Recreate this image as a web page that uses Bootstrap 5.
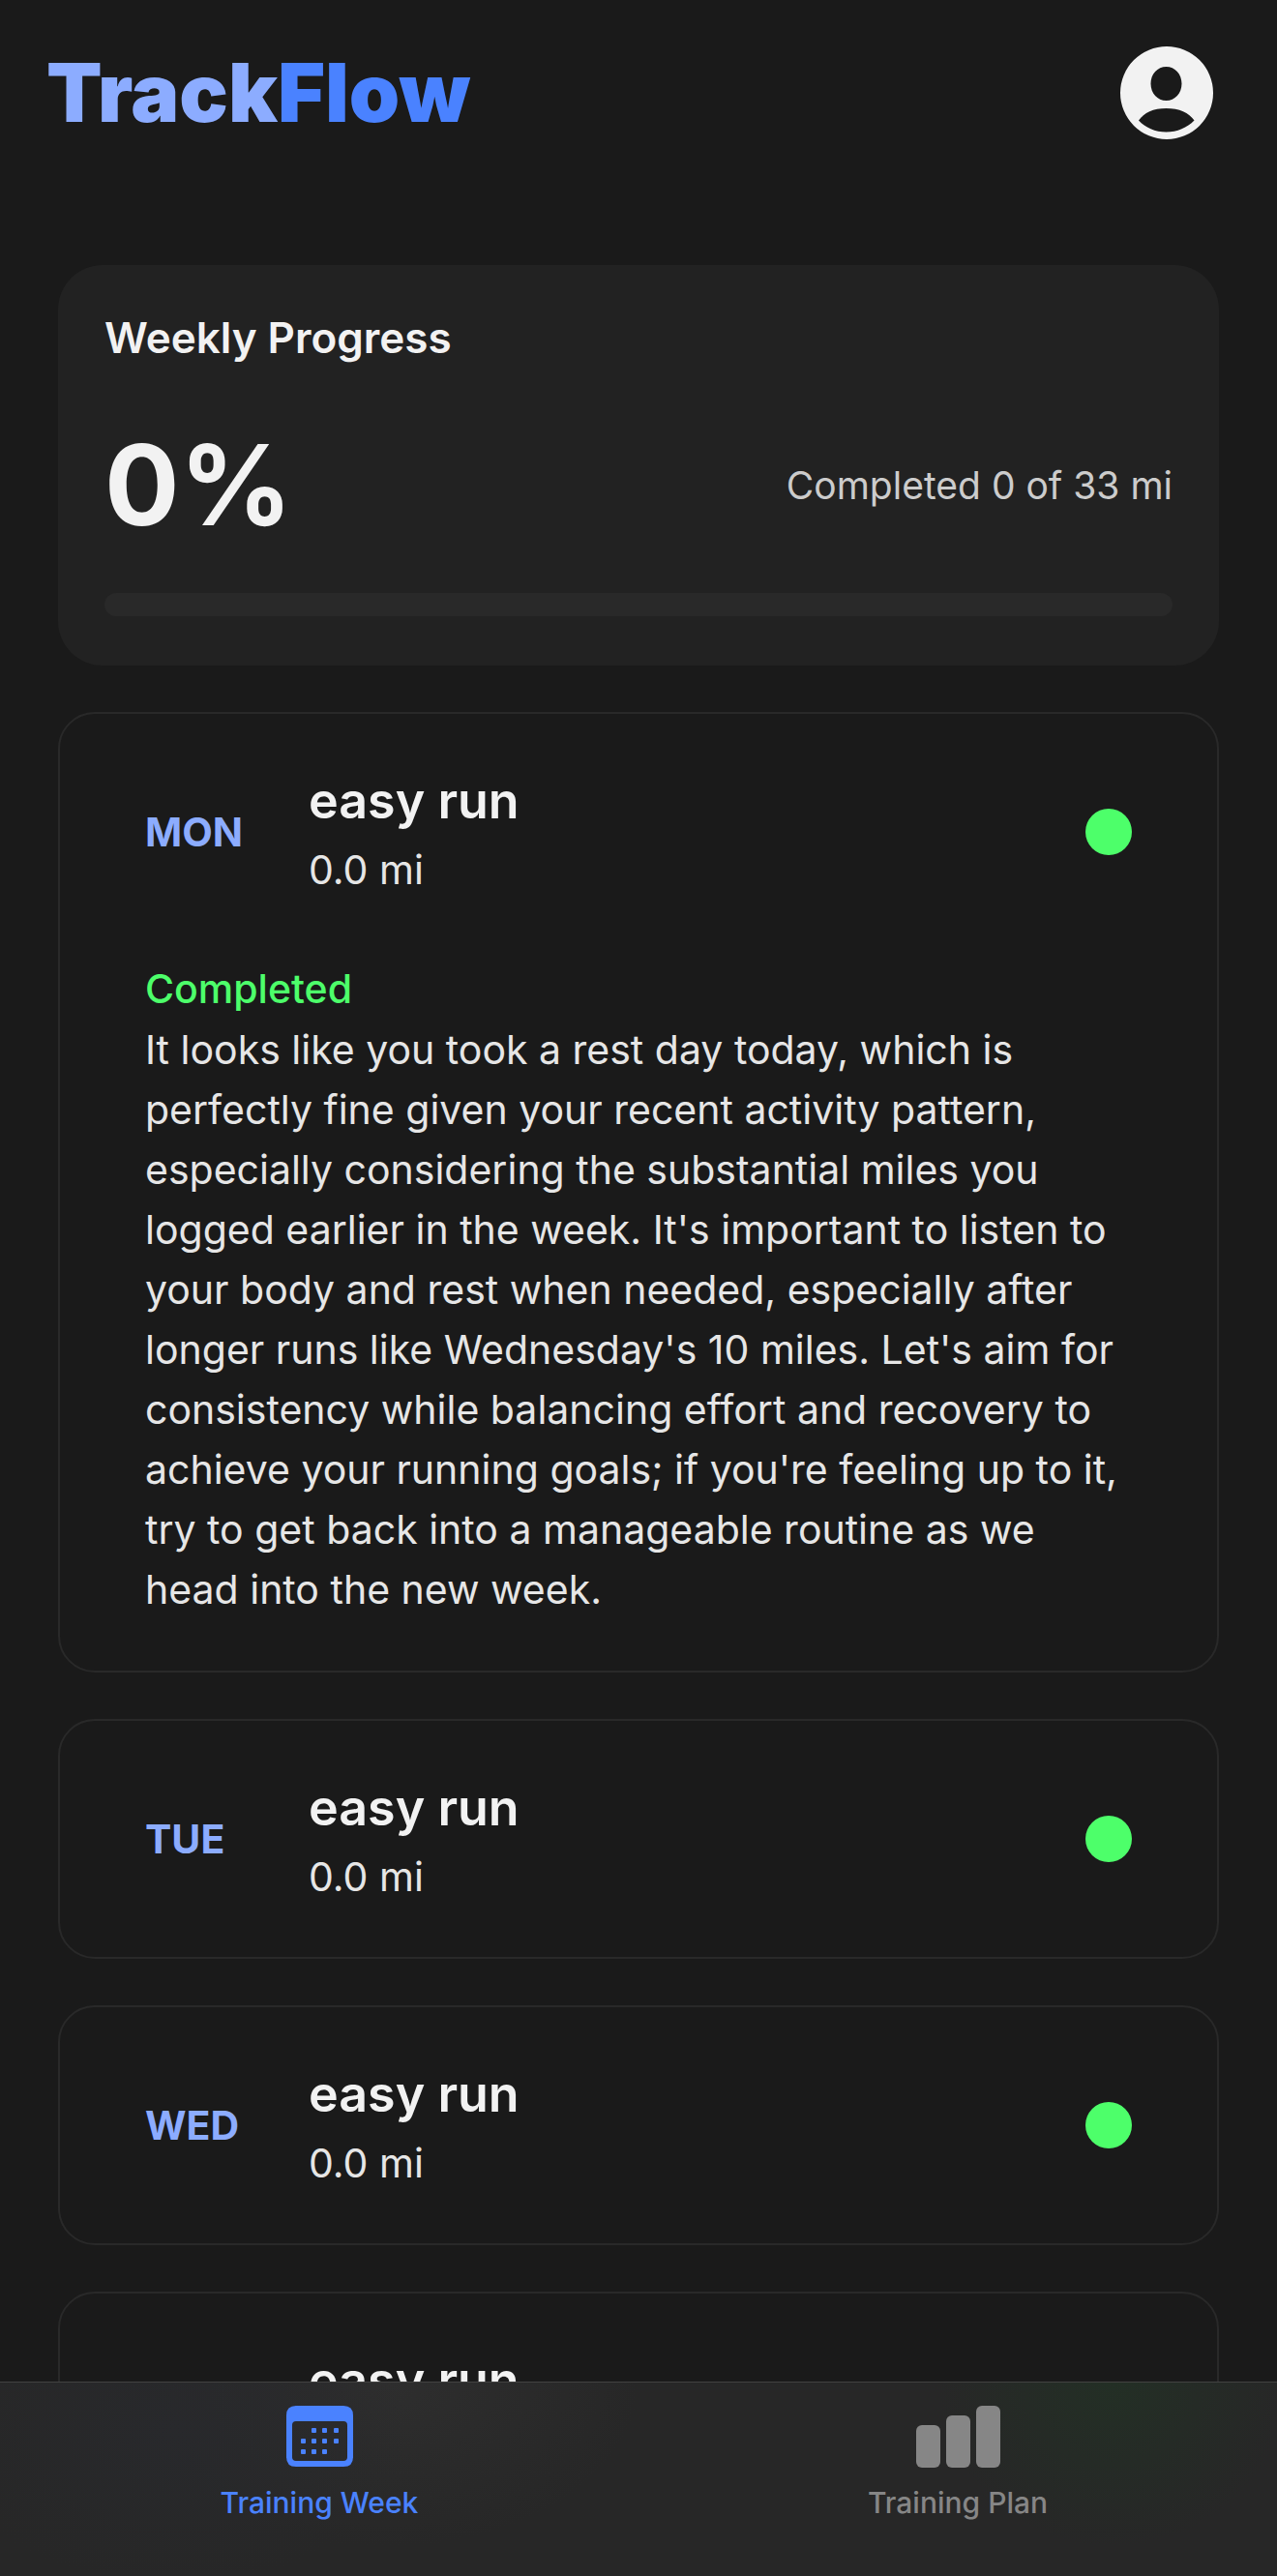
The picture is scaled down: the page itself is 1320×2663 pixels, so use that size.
<!DOCTYPE html>
<html lang="en" data-bs-theme="dark">
<head>
<meta charset="utf-8">
<meta name="viewport" content="width=device-width, initial-scale=1">
<title>TrackFlow</title>
<link href="https://cdn.jsdelivr.net/npm/bootstrap@5.3.0/dist/css/bootstrap.min.css" rel="stylesheet">
<style>
  :root {
    --tf-bg: #1a1a1a;
    --tf-surface: #222222;
    --tf-line: #292929;
    --tf-text: #f2f2f2;
    --tf-soft: #e6e6e6;
    --tf-muted: #cccccc;
    --tf-blue: #4a82ff;
    --tf-sky: #8cacff;
    --tf-green: #4dff6a;
  }
  body { background: var(--tf-bg); color: var(--tf-text); font-family: Inter, "Liberation Sans", sans-serif; }
  .app-header { padding: 48px 66px 48px 48px; }
  .brand { font-size: 84px; line-height: 96px; font-weight: 900; color: var(--tf-sky); }
  .brand span { color: var(--tf-blue); }
  .avatar { width: 96px; height: 96px; color: var(--tf-text); }
  .feed { padding: 82px 60px 0; gap: 48px; min-height: 0; }
  .summary { background: var(--tf-surface); border-radius: 46px; padding: 48px 48px 51px; }
  .summary-title { font-size: 44px; line-height: 54px; font-weight: 600; color: var(--tf-text); margin-bottom: 56px; }
  .percent { font-size: 115px; line-height: 140px; font-weight: 700; }
  .summary-note { font-size: 39px; line-height: 54px; color: var(--tf-muted); }
  .summary .progress { height: 24px; border-radius: 12px; margin-top: 41px; background: var(--tf-line); }
  .day { border: 2px solid var(--tf-line); border-radius: 38px; padding: 56px 88px; }
  .day-open { padding-bottom: 53px; }
  .day-name { width: 169px; font-size: 41px; line-height: 54px; font-weight: 700; color: var(--tf-sky); }
  .day-run { font-size: 52px; line-height: 68px; font-weight: 600; color: var(--tf-text); margin-bottom: 10px; }
  .day-miles { font-size: 41px; line-height: 54px; color: var(--tf-soft); }
  .dot { width: 48px; height: 48px; background: var(--tf-green); }
  .day-detail { font-size: 41px; line-height: 62px; color: var(--tf-soft); margin-top: 64px; }
  .day-status { color: var(--tf-green); font-weight: 500; line-height: 64px; }
  .tabs {
    min-height: 201px; padding-top: 24px; border-top: 1px solid #424242;
    background:
      radial-gradient(180px 170px at 1150px 0, #232f25 0%, #252b26 50%, transparent 100%),
      radial-gradient(240px 160px at 180px 50px, #28292c 0%, transparent 100%),
      radial-gradient(260px 170px at 400px 0, #2e2e2e 0%, transparent 100%),
      #272727;
  }
  .tab { gap: 18px; font-size: 30px; line-height: 36px; font-weight: 500; color: #868686; }
  .tab.active { color: var(--tf-blue); }
</style>
</head>
<body>
<div class="d-flex flex-column vh-100 overflow-hidden">
  <header class="app-header d-flex justify-content-between align-items-center flex-shrink-0">
    <h1 class="brand m-0">Track<span>Flow</span></h1>
    <button type="button" class="btn p-0 border-0 avatar" aria-label="Profile">
      <svg class="d-block" width="96" height="96" viewBox="0 0 96 96" fill="currentColor" aria-hidden="true">
        <path fill-rule="evenodd" d="M48 0a48 48 0 1 1 0 96a48 48 0 0 1 0-96ZM47.500 21C38.500 21 31.500 28.500 31.500 38.500S38.500 56 47.500 56S63.500 48.500 63.500 38.500S56.500 21 47.500 21ZM19 76.500C26 84 36 88.500 47.500 88.500S69 84 76.500 76.500C71 68.500 61 64 47.500 64S24.500 68.500 19 76.500Z"/>
      </svg>
    </button>
  </header>

  <main class="feed d-flex flex-column flex-fill overflow-hidden">
    <section class="summary flex-shrink-0">
      <h2 class="summary-title">Weekly Progress</h2>
      <div class="d-flex justify-content-between align-items-center">
        <div class="percent">0%</div>
        <div class="summary-note">Completed 0 of 33 mi</div>
      </div>
      <div class="progress" role="progressbar" aria-label="Weekly progress" aria-valuenow="0" aria-valuemin="0" aria-valuemax="100">
        <div class="progress-bar" style="width: 0%"></div>
      </div>
    </section>

    <article class="day day-open flex-shrink-0">
      <div class="d-flex align-items-center">
        <div class="day-name">MON</div>
        <div class="flex-fill">
          <h3 class="day-run mt-0">easy run</h3>
          <div class="day-miles">0.0 mi</div>
        </div>
        <span class="dot rounded-circle"></span>
      </div>
      <div class="day-detail">
        <div class="day-status">Completed</div>
        <p class="m-0">It looks like you took a rest day today, which is perfectly fine given your recent activity pattern, especially considering the substantial miles you logged earlier in the week. It's important to listen to your body and rest when needed, especially after longer runs like Wednesday's 10 miles. Let's aim for consistency while balancing effort and recovery to achieve your running goals; if you're feeling up to it, try to get back into a manageable routine as we head into the new week.</p>
      </div>
    </article>

    <article class="day flex-shrink-0">
      <div class="d-flex align-items-center">
        <div class="day-name">TUE</div>
        <div class="flex-fill">
          <h3 class="day-run mt-0">easy run</h3>
          <div class="day-miles">0.0 mi</div>
        </div>
        <span class="dot rounded-circle"></span>
      </div>
    </article>

    <article class="day flex-shrink-0">
      <div class="d-flex align-items-center">
        <div class="day-name">WED</div>
        <div class="flex-fill">
          <h3 class="day-run mt-0">easy run</h3>
          <div class="day-miles">0.0 mi</div>
        </div>
        <span class="dot rounded-circle"></span>
      </div>
    </article>

    <article class="day flex-shrink-0">
      <div class="d-flex align-items-center">
        <div class="day-name">THU</div>
        <div class="flex-fill">
          <h3 class="day-run mt-0">easy run</h3>
          <div class="day-miles">0.0 mi</div>
        </div>
        <span class="dot rounded-circle"></span>
      </div>
    </article>
  </main>

  <nav class="tabs row g-0 flex-shrink-0" aria-label="Main">
    <a href="#week" class="tab active col d-flex flex-column align-items-center text-decoration-none" aria-current="page">
      <svg width="69" height="64" viewBox="0 0 69 64" fill="currentColor" aria-hidden="true">
        <path fill-rule="evenodd" d="M10 0H59Q69 0 69 10V53Q69 63 59 63H10Q0 63 0 53V10Q0 0 10 0ZM10 16Q6 16 6 20V53Q6 57 10 57H59Q63 57 63 53V20Q63 16 59 16Z"/>
        <g>
          <rect x="26" y="23" width="5" height="5" rx="1"/><rect x="37" y="23" width="5" height="5" rx="1"/><rect x="49" y="23" width="5" height="5" rx="1"/>
          <rect x="15" y="34" width="5" height="5" rx="1"/><rect x="26" y="34" width="5" height="5" rx="1"/><rect x="37" y="34" width="5" height="5" rx="1"/><rect x="49" y="34" width="5" height="5" rx="1"/>
          <rect x="15" y="45" width="5" height="5" rx="1"/><rect x="26" y="45" width="5" height="5" rx="1"/><rect x="37" y="45" width="5" height="5" rx="1"/>
        </g>
      </svg>
      <span>Training Week</span>
    </a>
    <a href="#plan" class="tab col d-flex flex-column align-items-center text-decoration-none">
      <svg width="87" height="64" viewBox="0 0 87 64" fill="currentColor" aria-hidden="true">
        <rect x="0" y="20" width="25" height="44" rx="6"/><rect x="31" y="10" width="25" height="54" rx="6"/><rect x="62" y="0" width="25" height="64" rx="6"/>
      </svg>
      <span>Training Plan</span>
    </a>
  </nav>
</div>
<script src="https://cdn.jsdelivr.net/npm/bootstrap@5.3.0/dist/js/bootstrap.bundle.min.js"></script>
</body>
</html>
